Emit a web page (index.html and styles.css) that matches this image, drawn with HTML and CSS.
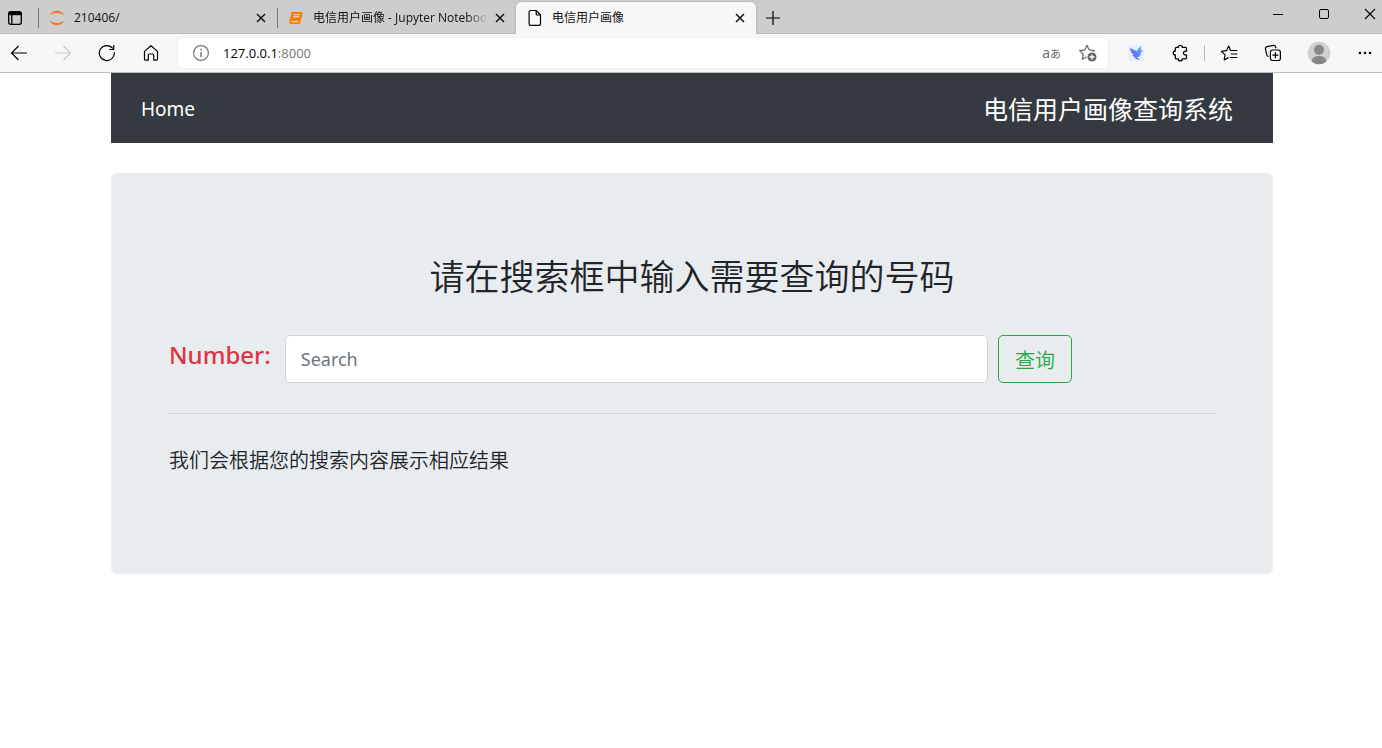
FILE: index.html
```html
<!DOCTYPE html>
<html lang="zh-CN">
<head>
<meta charset="utf-8">
<meta name="viewport" content="width=device-width, initial-scale=1">
<title>电信用户画像</title>
<link rel="stylesheet" href="styles.css">
</head>
<body>
<header class="browser">
  <div class="tabstrip">
    <button class="icon-btn tab-actions" aria-label="Tab actions">
      <svg width="16" height="16" viewBox="0 0 16 16" fill="none" stroke="#000" stroke-width="1.3"><rect x="1.7" y="1.7" width="12.6" height="12.6" rx="2"/><path d="M1.7 3.6h12.6" stroke-width="3.2"/><path d="M4.8 4v10"/></svg>
    </button>
    <div class="tab tab-divided">
      <button class="tab-label">
        <svg width="18" height="18" viewBox="0 0 18 18" fill="#f37726"><path d="M1.8 6.2C3 3.4 5.7 1.7 9 1.7s6 1.7 7.200 4.500C14.300 4.800 11.800 4.100 9 4.100s-5.300.7-7.200 2.100z"/><path d="M1.800 11.800C3 14.600 5.700 16.300 9 16.300s6-1.700 7.200-4.500c-1.900 1.400-4.400 2.100-7.200 2.100s-5.300-.7-7.200-2.100z"/></svg>
        <span class="tab-text">210406/</span>
      </button>
      <button class="icon-btn close" aria-label="Close tab"><svg width="10" height="10" viewBox="0 0 10 10" stroke="#111" stroke-width="1.500"><path d="M1 1l8 8M9 1l-8 8"/></svg></button>
    </div>
    <div class="tab tab-divided">
      <button class="tab-label">
        <svg width="18" height="18" viewBox="0 0 18 18"><path d="M5.800 3h8.700c.9 0 1.400.6 1.100 1.500L13.300 13.500c-.3 1-.9 1.500-1.900 1.500H4c-1.500 0-2.200-1-1.800-2.400L4.300 4.300C4.500 3.400 5 3 5.800 3z" fill="#f57c00"/><path d="M6.500 5.700h6.300M6 7.800h6.300M4.200 12.700h7.200" stroke="#fff" stroke-width="1.100" opacity=".85"/></svg>
        <span class="tab-text faded">电信用户画像 - Jupyter Notebook</span>
      </button>
      <button class="icon-btn close" aria-label="Close tab"><svg width="10" height="10" viewBox="0 0 10 10" stroke="#111" stroke-width="1.500"><path d="M1 1l8 8M9 1l-8 8"/></svg></button>
    </div>
    <div class="tab active">
      <button class="tab-label">
        <svg width="18" height="18" viewBox="0 0 18 18" fill="none" stroke="#000" stroke-width="1.200" stroke-linejoin="round"><path d="M4.600 1.500h5.600l4.300 4.500v8.800c0 .9-.6 1.600-1.500 1.600H4.600c-.9 0-1.500-.7-1.500-1.600V3.100c0-.9.6-1.600 1.500-1.600z"/><path d="M10.200 1.500V5c0 .7.300 1 1 1h3.300"/></svg>
        <span class="tab-text">电信用户画像</span>
      </button>
      <button class="icon-btn close" aria-label="Close tab"><svg width="10" height="10" viewBox="0 0 10 10" stroke="#111" stroke-width="1.500"><path d="M1 1l8 8M9 1l-8 8"/></svg></button>
    </div>
    <button class="icon-btn new-tab" aria-label="New tab"><svg width="16" height="16" viewBox="0 0 16 16" stroke="#000" stroke-width="1.200"><path d="M8 1v14M1 8h14"/></svg></button>
    <div class="window-controls">
      <button class="icon-btn" aria-label="Minimize"><svg width="12" height="12" viewBox="0 0 12 12" stroke="#000"><path d="M1 6.500h10"/></svg></button>
      <button class="icon-btn" aria-label="Maximize"><svg width="12" height="12" viewBox="0 0 12 12" fill="none" stroke="#000"><rect x="1.500" y="1.500" width="9" height="9" rx="1.500"/></svg></button>
      <button class="icon-btn" aria-label="Close window"><svg width="12" height="12" viewBox="0 0 12 12" stroke="#000" stroke-width="1.100"><path d="M1 1l10 10M11 1L1 11"/></svg></button>
    </div>
  </div>
  <div class="toolbar">
    <div class="nav-buttons">
      <button class="icon-btn" aria-label="Back"><svg width="18" height="18" viewBox="0 0 18 18" fill="none" stroke="#000" stroke-width="1.200"><path d="M17 9H1.500M8.500 2L1.500 9l7 7"/></svg></button>
      <button class="icon-btn" aria-label="Forward" disabled><svg width="18" height="18" viewBox="0 0 18 18" fill="none" stroke="#c8c8c8" stroke-width="1.200"><path d="M1 9h15.500M9.500 2l7 7-7 7"/></svg></button>
      <button class="icon-btn" aria-label="Refresh"><svg width="18" height="18" viewBox="0 0 18 18" fill="none" stroke="#000" stroke-width="1.200"><path d="M16.300 8.200A7.500 7.500 0 1 1 14.800 4.500"/><path d="M15.700 1v4.500h-4.600"/></svg></button>
      <button class="icon-btn" aria-label="Home"><svg width="18" height="18" viewBox="0 0 18 18" fill="none" stroke="#000" stroke-width="1.200" stroke-linejoin="round"><path d="M2.500 7.400L9 1.800l6.500 5.600v7.700c0 .7-.4 1.100-1.100 1.100h-2.700v-5c0-.8-.4-1.200-1.200-1.200h-3c-.8 0-1.200.4-1.200 1.200v5H3.600c-.7 0-1.100-.4-1.100-1.100z"/></svg></button>
    </div>
    <div class="address">
      <svg width="18" height="18" viewBox="0 0 18 18" fill="none" stroke="#767676" stroke-width="1.200"><circle cx="9" cy="9" r="7.400"/><path d="M9 8v5"  stroke-width="1.500"/><path d="M9 4.800v1.600" stroke-width="1.500"/></svg>
      <div class="url">127.0.0.1<span class="port">:8000</span></div>
      <button class="icon-btn translate" aria-label="Translate"><span class="latin">a</span><span class="kana">あ</span></button>
      <button class="icon-btn" aria-label="Add to favorites"><svg width="20" height="20" viewBox="0 0 20 20" fill="none" stroke="#666" stroke-width="1.200" stroke-linejoin="round"><path d="M9 2.200l2.200 4.700 5.200.7-3.800 3.600.9 5L9 13.700l-4.600 2.500.9-5L1.600 7.600l5.200-.7z"/><circle cx="14" cy="14" r="5" fill="#666" stroke="#fff" stroke-width="1"/><path d="M14 11.500v5M11.500 14h5" stroke="#fff" stroke-width="1.300"/></svg></button>
    </div>
    <div class="extensions">
      <button class="icon-btn" aria-label="Bird extension"><svg width="18" height="18" viewBox="0 0 18 18"><defs><linearGradient id="bird" x1="1" y1="0" x2="0" y2="1"><stop offset="0" stop-color="#4cb6ff"/><stop offset="1" stop-color="#7b4dfa"/></linearGradient></defs><rect x="1" y="1" width="16" height="16" rx="2" fill="#e7effb"/><path d="M3 4l7 3.300C11 5 12.500 3 14.300 2.300l-.6 4 2.500.5-2.300 1.700c-.2 3-1.600 4.800-4.400 4.800l3.500 2.200c-2.500.3-4.500-.4-5.600-2.500L4.900 11.200l2.100-.3C4.600 9.500 3.300 7.200 3 4z" fill="url(#bird)"/></svg></button>
      <button class="icon-btn" aria-label="Extensions"><svg width="18" height="18" viewBox="0 0 18 18" fill="none" stroke="#000" stroke-width="1.300" stroke-linejoin="round"><path d="M5.500 3.300h1.800a2 2 0 0 1 4 0h3c.7 0 1.200.5 1.200 1.200v2.700h-.7a1.900 1.900 0 1 0 0 3.700h.7v2.800c0 .7-.5 1.200-1.200 1.200h-3a2 2 0 0 1-4 0H5.500c-.7 0-1.200-.5-1.200-1.200V11a2 2 0 0 1 0-4V4.500c0-.7.5-1.200 1.200-1.200z"/></svg></button>
      <span class="divider"></span>
      <button class="icon-btn" aria-label="Favorites"><svg width="18" height="18" viewBox="0 0 18 18" fill="none" stroke="#000" stroke-width="1.200" stroke-linejoin="round"><path d="M10.500 6.500L8.700 2 6.500 6.700l-5.100.7 3.700 3.500-.9 5L8.500 13.600M10.500 6.500h6.800M10.800 10h6.500M9.800 13.500h7.500"/></svg></button>
      <button class="icon-btn" aria-label="Collections"><svg width="18" height="18" viewBox="0 0 18 18" fill="none" stroke="#000" stroke-width="1.200"><rect x="6.400" y="6" width="10" height="10.500" rx="2.200"/><path d="M11.400 8.200v6M8.400 11.200h6M4.700 12.500c-1-.1-1.600-.7-1.900-1.700L1.500 5.100c-.2-1.200.3-2.100 1.500-2.400l6.300-1.300c1.200-.2 2.100.3 2.400 1.500l.3 1.200"/></svg></button>
      <button class="icon-btn profile" aria-label="Profile"><svg width="24" height="24" viewBox="0 0 24 24"><circle cx="12" cy="12" r="11.300" fill="#d2d0ce"/><circle cx="12" cy="8.800" r="5" fill="#8a8886"/><path d="M4.600 20.400c.5-3.600 3.400-5.400 7.400-5.400s6.900 1.800 7.400 5.400A11.300 11.300 0 0 1 4.600 20.400z" fill="#8a8886"/></svg></button>
      <button class="icon-btn" aria-label="Settings and more"><svg width="14" height="4" viewBox="0 0 14 4"><circle cx="2" cy="2" r="1.300"/><circle cx="7" cy="2" r="1.300"/><circle cx="12" cy="2" r="1.300"/></svg></button>
    </div>
  </div>
</header>
<main class="page">
  <nav class="navbar">
    <a class="nav-link" href="#">Home</a>
    <span class="brand">电信用户画像查询系统</span>
  </nav>
  <section class="jumbotron">
    <h1 class="headline">请在搜索框中输入需要查询的号码</h1>
    <form class="search">
      <label class="search-label" for="number">Number:</label>
      <input class="search-input" id="number" type="search" placeholder="Search">
      <button class="search-btn" type="submit">查询</button>
    </form>
    <hr class="rule">
    <p class="hint">我们会根据您的搜索内容展示相应结果</p>
  </section>
</main>
</body>
</html>
```
FILE: styles.css
```css
* {
  box-sizing: border-box;
}

body {
  margin: 0;
  background: #fff;
  color: #212529;
  font-family: "Open Sans", "Noto Sans CJK SC", sans-serif;
}

button,
input {
  font: inherit;
}

svg {
  display: block;
  flex: none;
}

.browser {
  background: #f7f7f7;
  border-bottom: 1px solid #bcbcbc;
  font-size: 12px;
  color: #111;
}

.icon-btn {
  display: flex;
  align-items: center;
  justify-content: center;
  padding: 0;
  border: 0;
  background: none;
  color: inherit;
}

.tabstrip {
  display: flex;
  height: 34px;
  padding-top: 2px;
  background: #cdcdcd;
  box-shadow: inset 0 -1px #bdbdbd;
}

.tab-actions {
  width: 30px;
  margin-right: 8px;
}

.tab {
  display: flex;
  flex: 0 1 239px;
  align-items: center;
  min-width: 0;
  padding: 0 10px;
}

.tab-divided {
  background: linear-gradient(#777, #777) 0 6px / 1px 20px no-repeat;
}

.active {
  flex-basis: 240px;
  border-radius: 5px 5px 0 0;
  background: #f7f7f7;
  box-shadow: 0 0 2px #999;
  clip-path: inset(-2px -2px 0 -2px);
}

.tab-label {
  display: flex;
  flex: 1;
  gap: 8px;
  align-items: center;
  min-width: 0;
  padding: 0;
  border: 0;
  background: none;
  color: inherit;
  text-align: left;
}

.tab-text {
  flex: 1;
  overflow: hidden;
  line-height: 20px;
  white-space: nowrap;
}

.faded {
  mask-image: linear-gradient(90deg, #000 88%, transparent);
}

.close {
  width: 12px;
  margin-left: 6px;
}

.new-tab {
  width: 34px;
}

.window-controls {
  display: flex;
  align-items: center;
  gap: 34px;
  height: 24px;
  margin-left: auto;
  padding-right: 6px;
}

.toolbar {
  display: flex;
  align-items: center;
  height: 38px;
}

.nav-buttons {
  display: flex;
  gap: 26px;
  padding: 0 18px 0 10px;
}

.address {
  display: flex;
  flex: 1;
  align-items: center;
  height: 30px;
  padding: 0 10px 0 14px;
  border-radius: 4px;
  background: #fff;
  box-shadow: 0 0 2px #ddd;
}

.url {
  flex: 1;
  padding-left: 13px;
  font-size: 13px;
  color: #000;
}

.port {
  color: #767676;
}

.translate {
  margin-right: 17px;
  color: #666;
  line-height: 18px;
}

.latin {
  font-size: 14px;
}

.kana {
  font-family: "Noto Sans CJK JP", sans-serif;
  font-size: 11px;
}

.extensions {
  display: flex;
  align-items: center;
  gap: 26px;
  padding: 0 10px 0 19px;
}

.divider {
  width: 1px;
  height: 16px;
  margin: 0 -11px;
  background: #bbb;
}

.profile {
  margin: 0 1px 0 -1px;
}

.page {
  padding: 0 109px 0 111px;
}

.navbar {
  display: flex;
  align-items: center;
  justify-content: space-between;
  min-height: 70px;
  padding: 12px 40px 10px 30px;
  background: #343a40;
  color: #fff;
}

.nav-link {
  color: inherit;
  font-family: "Noto Sans", sans-serif;
  font-size: 19px;
  text-decoration: none;
}

.brand {
  font-size: 25px;
  font-weight: 400;
  line-height: 40px;
}

.jumbotron {
  margin-top: 30px;
  padding: 80px 58px 98px;
  border-radius: 6px;
  background: #e9ecef;
}

.headline {
  margin: 0 0 34px;
  font-size: 35px;
  font-weight: 350;
  line-height: 48px;
  text-align: center;
}

.search {
  display: flex;
  align-items: flex-start;
  padding-right: 143px;
}

.search-label {
  margin-right: 14px;
  color: #dc3545;
  font-family: "Noto Sans", sans-serif;
  font-size: 24px;
  font-weight: 500;
  line-height: 40px;
}

.search-input {
  flex: 1;
  min-width: 0;
  height: 48px;
  padding: 0 15px;
  border: 1px solid #ced4da;
  border-radius: 5px;
  background: #fff;
  appearance: none;
  font-family: "Noto Sans", "Noto Sans CJK SC", sans-serif;
  font-size: 18px;
}

.search-input::placeholder {
  color: #6c757d;
}

.search-btn {
  height: 48px;
  margin-left: 10px;
  padding: 0 16px;
  border: 1px solid #28a745;
  border-radius: 5px;
  background: transparent;
  color: #28a745;
  font-size: 20px;
  font-weight: 350;
}

.rule {
  margin: 30px 0 32px;
  border: 0;
  border-top: 1px solid #ced2d6;
}

.hint {
  margin: 0;
  font-size: 20px;
  font-weight: 350;
  line-height: 30px;
}
```
